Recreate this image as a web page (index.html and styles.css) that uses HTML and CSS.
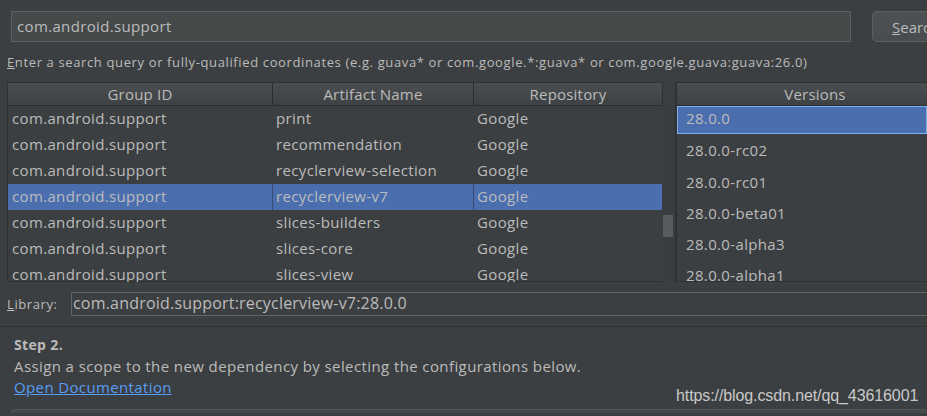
FILE: index.html
```html
<!DOCTYPE html>
<html>

<head>
    <title>Add Library Dependency</title>
    <meta charset="utf-8">
    <link rel="stylesheet" href="styles.css">
</head>

<body>
    <div class="sok">
        <div class="felt">com.android.support</div>
        <button class="knap"><u>S</u>earch</button>
    </div>
    <p class="hint"><u>E</u>nter a search query or fully-qualified coordinates (e.g. guava* or com.google.*:guava* or com.google.guava:guava:26.0)</p>

    <div class="browser">
        <div class="tabel">
            <div class="hoved">
                <div class="kol k1">Group ID</div>
                <div class="kol k2">Artifact Name</div>
                <div class="kol k3">Repository</div>
            </div>
            <div class="rammer">
                <div class="rækker" id="liste"></div>
                <div class="scroll"><div class="thumb"></div></div>
            </div>
        </div>
        <div class="deler"></div>
        <div class="versioner">
            <div class="hoved"><div class="kol">Versions</div></div>
            <div id="versionsliste"></div>
        </div>
    </div>

    <div class="bibliotek">
        <span class="label"><u>L</u>ibrary:</span>
        <div class="felt lib">com.android.support:recyclerview-v7:28.0.0</div>
    </div>

    <section class="trin">
        <h3>Step 2.</h3>
        <p>Assign a scope to the new dependency by selecting the configurations below.</p>
        <a href="#">Open Documentation</a>
        <div class="boks"></div>
    </section>

    <div class="vandmærke">https://blog.csdn.net/qq_43616001</div>

    <script>
        const artefakter = ["print", "recommendation", "recyclerview-selection", "recyclerview-v7", "slices-builders", "slices-core", "slices-view"];
        const versioner = ["28.0.0", "28.0.0-rc02", "28.0.0-rc01", "28.0.0-beta01", "28.0.0-alpha3", "28.0.0-alpha1"];

        const liste = document.querySelector("#liste");
        artefakter.forEach(navn => {
            const række = document.createElement("div");
            række.className = "række" + (navn == "recyclerview-v7" ? " valgt" : "");
            række.innerHTML = `<div class="celle k1">com.android.support</div><div class="celle k2">${navn}</div><div class="celle k3">Google</div>`;
            liste.appendChild(række);
        });

        const vliste = document.querySelector("#versionsliste");
        versioner.forEach((v, i) => {
            const række = document.createElement("div");
            række.className = "version" + (i == 0 ? " valgt" : "");
            række.textContent = v;
            vliste.appendChild(række);
        });
    </script>
</body></html>
```

FILE: styles.css
```css
body {
    margin: 0;
    width: 927px;
    height: 416px;
    overflow: hidden;
    background-color: #3c3f41;
    color: #bbbbbb;
    font-family: "Open Sans", sans-serif;
    font-size: 15px;
    letter-spacing: 0.35px;
    position: relative;
}

.sok {
    display: flex;
    gap: 21px;
    padding: 11px 0 0 11px;
}

.felt {
    box-sizing: border-box;
    height: 31px;
    width: 840px;
    padding: 0 5px;
    line-height: 28px;
    background-color: #45494a;
    border: 1px solid #5e6061;
    flex-shrink: 0;
    white-space: nowrap;
}

.knap {
    flex-shrink: 0;
    width: 80px;
    height: 31px;
    padding: 0 0 0 19px;
    text-align: left;
    font: inherit;
    color: #bbbbbb;
    background: linear-gradient(#4d5153, #484c4e);
    border: 1px solid #5e6060;
    border-radius: 5px;
}

.hint {
    margin: 10px 0 0 7px;
    font-size: 13px;
    line-height: 20px;
    letter-spacing: 0.63px;
    white-space: nowrap;
}

.browser {
    display: flex;
    margin-top: 10px;
    height: 200px;
}

.tabel {
    width: 668px;
    box-sizing: border-box;
    border-left: 1px solid #2f3133;
    margin-left: 7px;
    border-bottom: 1px solid #2f3133;
}

.hoved {
    display: flex;
    height: 22px;
    border-top: 1px solid #2f3133;
    border-bottom: 1px solid #2b2d2e;
    background: linear-gradient(#4b4e50, #3f4244);
}

.tabel .hoved {
    width: 654px;
    border-right: 1px solid #2f3133;
}

.kol {
    text-align: center;
    line-height: 22px;
    box-sizing: border-box;
    border-right: 1px solid #2b2d2e;
    letter-spacing: 0.2px;
}

.kol:last-child {
    border-right: none;
}

.k1 {
    width: 265px;
}

.k2 {
    width: 201px;
}

.k3 {
    width: 188px;
}

.rammer {
    display: flex;
    height: 176px;
    overflow: hidden;
}

.rækker {
    width: 654px;
}

.række {
    display: flex;
    height: 26px;
    line-height: 24px;
}

.celle {
    box-sizing: border-box;
    padding-left: 4px;
    white-space: nowrap;
}

.celle.k2,
.celle.k3 {
    padding-left: 3px;
}

.række.valgt {
    background-color: #4b6eaf;
}

.række.valgt .k1,
.række.valgt .k2 {
    border-right: 1px solid #374b73;
}

.scroll {
    width: 13px;
    background-color: #3a3d3f;
    padding-top: 109px;
    box-sizing: border-box;
}

.thumb {
    width: 10px;
    height: 22px;
    margin-left: 1px;
    background-color: #595c5e;
}

.deler {
    width: 2px;
    background-color: #2f3133;
}

.versioner {
    flex: 1;
    border-bottom: 1px solid #2f3133;
    overflow: hidden;
}

.versioner .hoved .kol {
    width: 100%;
    padding-left: 26px;
}

.version {
    height: 31.3px;
    line-height: 26px;
    padding-left: 9px;
    white-space: nowrap;
}

.version.valgt {
    height: 28px;
    margin-bottom: 3.3px;
    box-sizing: border-box;
    line-height: 23px;
    padding-left: 8px;
    background-color: #4b6eaf;
    border: 1px solid #7fb1f0;
}

.bibliotek {
    display: flex;
    align-items: center;
    margin-top: 10px;
    padding-left: 7px;
    height: 24px;
}

.label {
    flex-shrink: 0;
    width: 64px;
    font-size: 13px;
    letter-spacing: 0.6px;
}

.felt.lib {
    height: 24px;
    width: 870px;
    line-height: 21px;
    padding-left: 1px;
    font-size: 16px;
    letter-spacing: 0.2px;
    background-color: #3c3f41;
    border-color: #646464;
}

.trin {
    margin-top: 10px;
    border-top: 1px solid #2f3133;
    padding: 8px 0 0 14px;
}

.trin h3 {
    margin: 0;
    font-size: 14px;
    line-height: 20px;
}

.trin p {
    margin: 0;
    line-height: 22px;
    letter-spacing: 0.4px;
}

.trin a {
    color: #589df6;
    line-height: 20px;
    letter-spacing: 0.37px;
}

.boks {
    margin: 12px 0 0 -3px;
    height: 3px;
    border: 1px solid #55585a;
    border-bottom: none;
    border-radius: 5px 5px 0 0;
    background-color: #45494a;
}

.vandmærke {
    position: absolute;
    left: 676px;
    top: 387px;
    font-family: "Liberation Sans", Arial, sans-serif;
    font-size: 16px;
    letter-spacing: -0.1px;
    color: #c9c9c9;
}
```
